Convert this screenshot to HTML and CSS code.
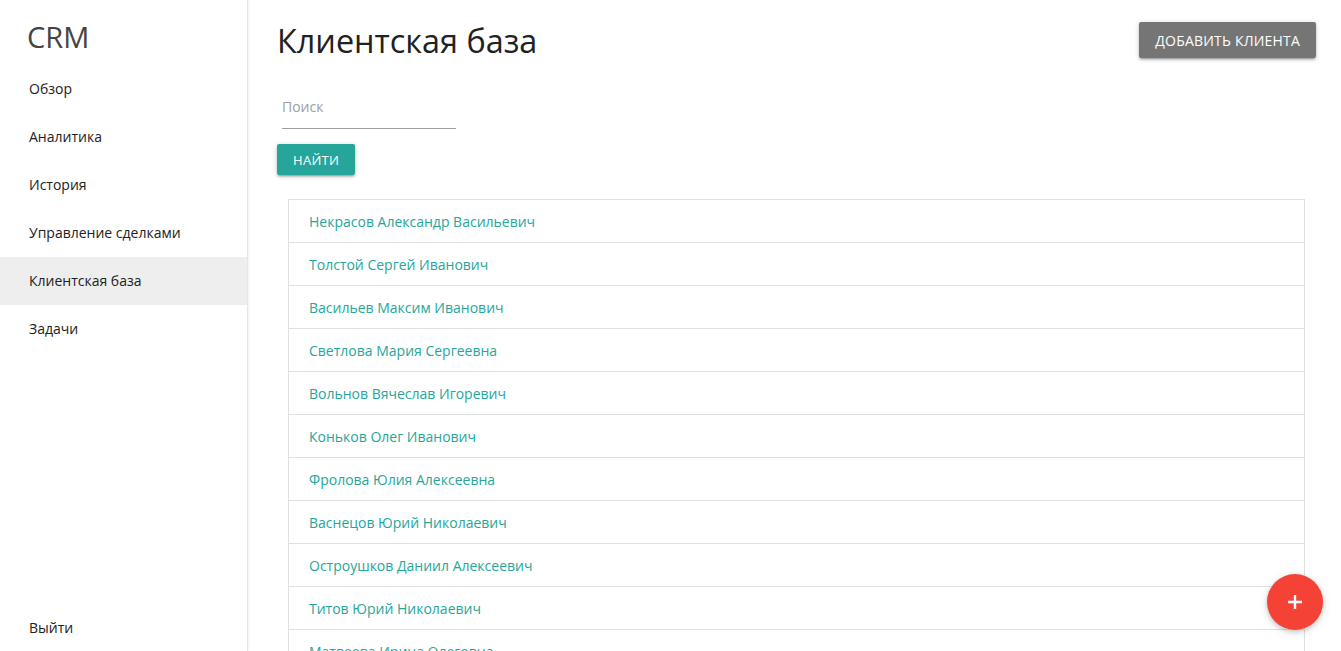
FILE: index.html
```html
<!DOCTYPE html>
<html lang="ru">
<head>
<meta charset="utf-8">
<title>CRM — Клиентская база</title>
<link rel="stylesheet" href="styles.css">
</head>
<body>
<div class="app">
  <aside class="sidebar">
    <div class="logo">CRM</div>
    <nav class="nav">
      <a class="nav-item" href="#">Обзор</a>
      <a class="nav-item" href="#">Аналитика</a>
      <a class="nav-item" href="#">История</a>
      <a class="nav-item" href="#">Управление сделками</a>
      <a class="nav-item active" href="#">Клиентская база</a>
      <a class="nav-item" href="#">Задачи</a>
    </nav>
    <a class="nav-item logout" href="#">Выйти</a>
  </aside>
  <main class="main">
    <div class="header">
      <h1 class="title">Клиентская база</h1>
      <button class="btn btn-grey">Добавить клиента</button>
    </div>
    <div class="search">
      <input class="search-input" type="text" placeholder="Поиск">
    </div>
    <button class="btn btn-teal">Найти</button>
    <ul class="collection">
      <li class="collection-item"><a href="#">Некрасов Александр Васильевич</a></li>
      <li class="collection-item"><a href="#">Толстой Сергей Иванович</a></li>
      <li class="collection-item"><a href="#">Васильев Максим Иванович</a></li>
      <li class="collection-item"><a href="#">Светлова Мария Сергеевна</a></li>
      <li class="collection-item"><a href="#">Вольнов Вячеслав Игоревич</a></li>
      <li class="collection-item"><a href="#">Коньков Олег Иванович</a></li>
      <li class="collection-item"><a href="#">Фролова Юлия Алексеевна</a></li>
      <li class="collection-item"><a href="#">Васнецов Юрий Николаевич</a></li>
      <li class="collection-item"><a href="#">Остроушков Даниил Алексеевич</a></li>
      <li class="collection-item"><a href="#">Титов Юрий Николаевич</a></li>
      <li class="collection-item"><a href="#">Матвеева Ирина Олеговна</a></li>
      <li class="collection-item"><a href="#">Смирнов Павел Андреевич</a></li>
    </ul>
  </main>
</div>
<button class="fab" aria-label="Добавить">
  <svg width="18" height="18" viewBox="0 0 18 18"><path d="M9 2v14M2 9h14" stroke="#fff" stroke-width="2.4" fill="none"/></svg>
</button>
</body>
</html>
```

FILE: styles.css
```css
* { box-sizing: border-box; }
html, body { margin: 0; padding: 0; height: 100%; }
body {
  font-family: "Open Sans", "Noto Sans", sans-serif;
  color: #212121;
  background: #fff;
  overflow: hidden;
}
.app {
  display: grid;
  grid-template-columns: 248px 1fr;
  height: 100vh;
}
.sidebar {
  display: flex;
  flex-direction: column;
  border-right: 1px solid #e6e6e6;
  box-shadow: 1px 0 2px rgba(0,0,0,0.06);
  background: #fff;
  z-index: 1;
}
.logo {
  font-size: 29px;
  color: #444;
  padding: 17px 0 0 27px;
  height: 65px;
  line-height: 40px;
}
.nav { display: flex; flex-direction: column; flex: 1; }
.nav-item {
  display: block;
  height: 48px;
  line-height: 48px;
  padding-left: 29px;
  font-size: 14px;
  color: #212121;
  text-decoration: none;
}
.nav-item.active { background: #eeeeee; }
.logout { height: 48px; line-height: 50px; }
.main {
  padding: 0 36px 0 29px;
  overflow: hidden;
}
.header {
  display: flex;
  justify-content: space-between;
  align-items: flex-start;
}
.title {
  margin: 18px 0 2px;
  font-size: 32.4px;
  font-weight: 400;
  line-height: 44px;
  color: #212121;
}
.btn {
  border: none;
  color: #fff;
  text-transform: uppercase;
  font-family: inherit;
  border-radius: 2px;
  box-shadow: 0 2px 2px 0 rgba(0,0,0,0.14), 0 3px 1px -2px rgba(0,0,0,0.12), 0 1px 5px 0 rgba(0,0,0,0.2);
  cursor: pointer;
}
.btn-grey {
  margin-top: 22px;
  background: #757575;
  height: 36px;
  padding: 0 16px;
  font-size: 14px;
  letter-spacing: 0.2px;
  margin-right: -11px;
}
.btn-teal {
  display: block;
  background: #26a69a;
  height: 31px;
  padding: 0 16px;
  font-size: 13px;
  font-weight: 500;
  letter-spacing: 0.3px;
}
.search { padding: 26px 0 15px 5px; }
.search-input {
  width: 174px;
  border: none;
  border-bottom: 1px solid #9e9e9e;
  outline: none;
  font-family: inherit;
  font-size: 14px;
  height: 39px;
  padding: 0 0 6px;
  color: #212121;
}
.search-input::placeholder { color: #9e9e9e; }
.collection {
  list-style: none;
  margin: 24px 0 0 11px;
  padding: 0;
  border: 1px solid #e0e0e0;
}
.collection-item {
  height: 43px;
  line-height: 44px;
  padding-left: 20px;
  border-bottom: 1px solid #e0e0e0;
  font-size: 14px;
}
.collection-item a { color: #26a69a; text-decoration: none; }
.fab {
  position: fixed;
  left: 1267px;
  top: 574px;
  width: 56px;
  height: 56px;
  border-radius: 50%;
  border: none;
  background: #f44336;
  display: flex;
  align-items: center;
  justify-content: center;
  box-shadow: 0 2px 5px rgba(0,0,0,0.16), 0 2px 10px rgba(0,0,0,0.12);
  padding: 0;
}
```
